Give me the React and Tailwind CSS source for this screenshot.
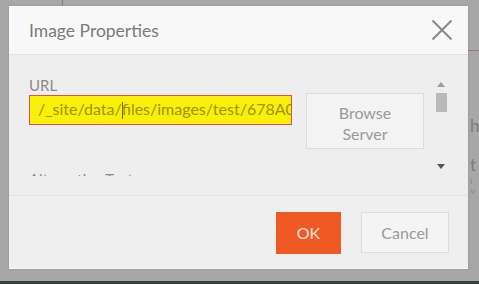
import React from "react";

export default function App() {
  const font = { fontFamily: "Lato, 'Open Sans', sans-serif" };
  return (
    <div className="relative w-[479px] h-[284px] overflow-hidden bg-[#a7a7a7] flex flex-col" style={font}>
      {/* background page bits behind overlay */}
      <div className="absolute left-[62px] top-0 w-[1px] h-[6px] bg-[#9a7a66]" />
      <div className="absolute left-[468px] top-[50px] w-[11px] h-[1px] bg-[#9a7a66]" />
      <div className="absolute left-[470px] top-[117px] text-[17px] leading-none text-[#7c7c7c]">h</div>
      <div className="absolute left-[470px] top-[156px] text-[17px] leading-none text-[#7c7c7c]">t</div>
      <div className="absolute left-[470px] top-[175px] text-[10px] leading-none text-[#8a8a8a]">ı v</div>

      <div className="h-[6px] shrink-0" />
      <div className="ml-[9px] w-[459px] h-[263px] shrink-0 flex flex-col bg-[#eeeeee] shadow-[0_0_2px_rgba(0,0,0,0.15)]">
        {/* header */}
        <div className="h-[49px] shrink-0 bg-[#f8f8f8] border-b border-[#e3e3e3] flex items-center justify-between pl-[20px] pr-[15px]">
          <div className="text-[17.5px] text-[#7b7b7b] leading-none pt-[1px]">Image Properties</div>
          <svg width="22" height="22" viewBox="0 0 22 22">
            <path d="M1.5 1.5 L20.5 20.5 M20.5 1.5 L1.5 20.5" stroke="#8a8a8a" strokeWidth="2" fill="none" />
          </svg>
        </div>
        {/* body */}
        <div className="h-[141px] shrink-0 border-b border-[#e3e3e3] flex pt-[20px]">
          <div className="w-[424px] h-[101px] overflow-hidden pl-[20px] shrink-0">
            <div className="text-[15px] leading-none text-[#8a8a8a] pt-[3px] h-[22px]">URL</div>
            <div className="flex items-start gap-[14px] -mt-[2px]">
              <div className="w-[263px] h-[30px] border border-[#e05050] bg-[#f8f00a] overflow-hidden flex items-center pl-[8px] whitespace-nowrap">
                <span className="text-[16px] text-[#a09400] leading-none relative">
                  /_site/data/<span className="inline-block w-[1px] h-[17px] bg-[#6a6400] align-middle -mr-[1px]" />files/images/test/678A0-
                </span>
              </div>
              <div className="w-[118px] h-[56px] -mt-[2px] border border-[#dcdcdc] bg-[#f3f3f3] flex flex-col items-center justify-center pt-[3px] text-[16px] leading-[21px] text-[#9a9a9a]">
                <span>Browse</span>
                <span>Server</span>
              </div>
            </div>
            <div className="mt-[23px] text-[15px] leading-none text-[#8a8a8a]">Alternative Text</div>
          </div>
          {/* scrollbar */}
          <div className="w-[14px] ml-[1px] h-[101px] flex flex-col items-center pt-[7px]">
            <svg width="8" height="5" viewBox="0 0 8 5"><path d="M0 5 L4 0 L8 5 Z" fill="#9c9c9c" /></svg>
            <div className="mt-[6px] w-[11px] h-[19px] bg-[#b9b9b9]" />
            <div className="flex-1" />
            <svg width="8" height="5" viewBox="0 0 8 5" className="mb-[7px]"><path d="M0 0 L8 0 L4 5 Z" fill="#555" /></svg>
          </div>
        </div>
        {/* footer */}
        <div className="flex-1 bg-[#efefef] flex items-start justify-end gap-[20px] pt-[16px] pr-[19px] border-b border-[#f8f8f8]">
          <div className="w-[65px] h-[42px] bg-[#ef5a24] text-[#fde3d6] text-[16px] flex items-center justify-center">OK</div>
          <div className="w-[88px] h-[41px] bg-[#f4f4f4] border border-[#dddddd] text-[#9a9a9a] text-[16px] flex items-center justify-center">Cancel</div>
        </div>
      </div>
      <div className="flex-1" />
      <div className="h-[3px] shrink-0 bg-[#33443f]" />
    </div>
  );
}
